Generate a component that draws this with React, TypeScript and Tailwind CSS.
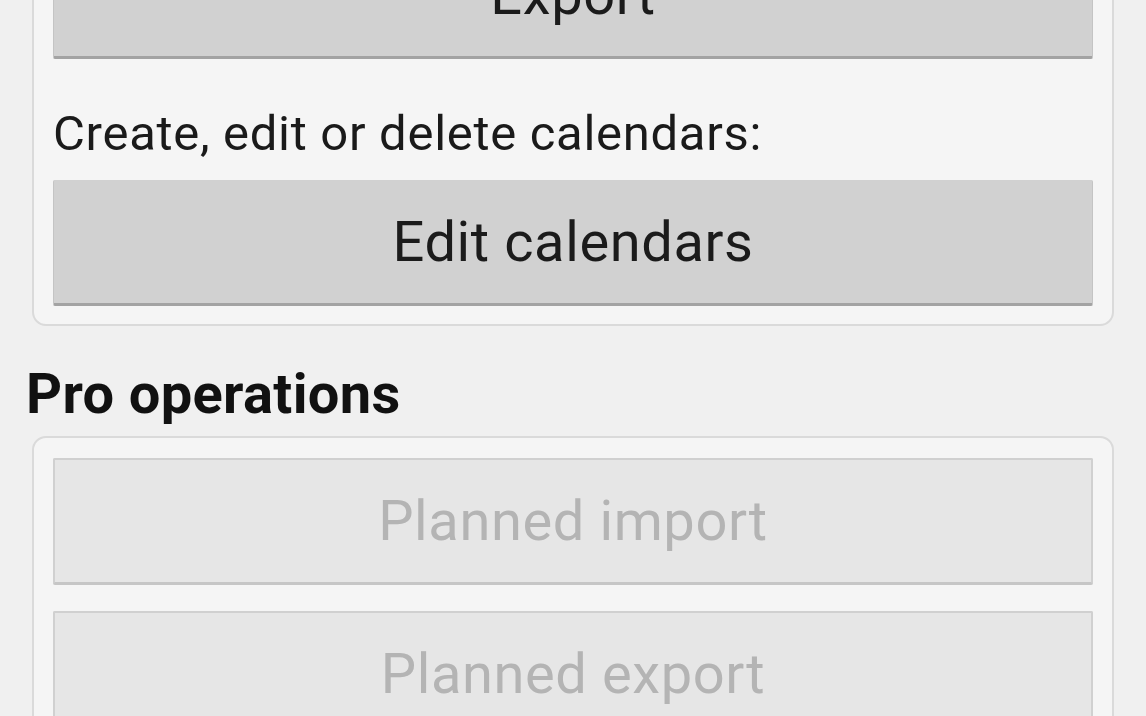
import React from "react";

function ActionButton({ label, disabled = false }: { label: string; disabled?: boolean }) {
  if (disabled) {
    return (
      <div className="h-[127px] flex items-center justify-center rounded-[2px] bg-[#e6e6e6] border-2 border-[#d0d0d0] border-b-[3px] border-b-[#c6c6c6] text-[56px] leading-[56px] tracking-[0.6px] text-[#b4b4b4]">
        {label}
      </div>
    );
  }
  return (
    <div className="h-[126px] flex items-center justify-center rounded-[2px] bg-[#d1d1d1] border-x border-x-[#c4c4c4] border-b-[3px] border-b-[#a3a3a3] text-[56px] leading-[56px] tracking-[0.6px] text-[#1b1b1b]">
      {label}
    </div>
  );
}

export default function App() {
  return (
    <div
      className="w-[1146px] h-[716px] overflow-hidden bg-[#f0f0f0]"
      style={{ fontFamily: "Roboto, 'Noto Sans', sans-serif" }}
    >
      <div className="mt-[-90px] ml-[32px] mr-[32px]">
        {/* Import / export card */}
        <div className="rounded-[14px] border-2 border-[#dadada] bg-[#f5f5f5] px-[19px] pt-[21px] pb-[18px]">
          <ActionButton label="Export" />
          <p className="mt-[47px] mb-[18px] text-[49px] leading-[56px] tracking-[0.7px] text-[#1a1a1a]">
            Create, edit or delete calendars:
          </p>
          <ActionButton label="Edit calendars" />
        </div>
      </div>

      <h2 className="ml-[26px] mt-[40px] mb-[14px] text-[56px] leading-[56px] tracking-[0.35px] font-bold text-[#111]">
        Pro operations
      </h2>

      <div className="ml-[32px] mr-[32px]">
        <div className="rounded-[14px] border-2 border-[#dadada] bg-[#f5f5f5] px-[19px] pt-[20px] pb-[20px] flex flex-col gap-[26px]">
          <ActionButton label="Planned import" disabled />
          <ActionButton label="Planned export" disabled />
        </div>
      </div>
    </div>
  );
}
